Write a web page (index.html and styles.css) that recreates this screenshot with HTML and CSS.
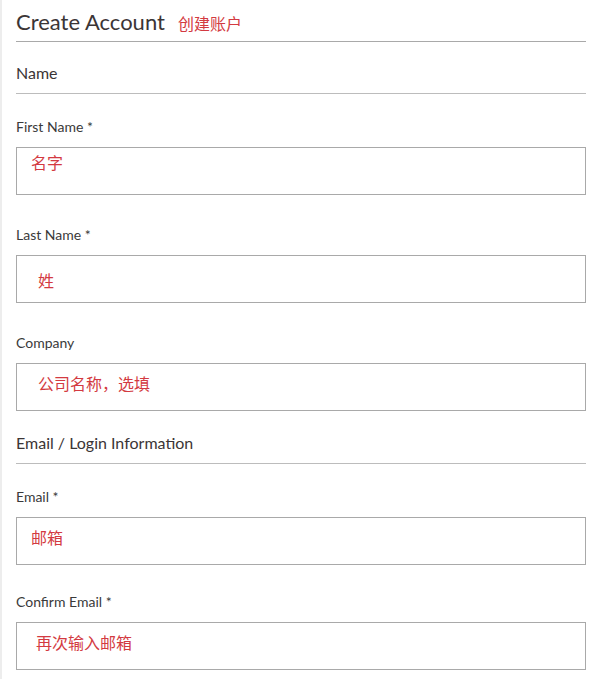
FILE: index.html
```html
<!DOCTYPE html>
<html lang="en">
<head>
    <meta charset="UTF-8">
    <meta name="viewport" content="width=device-width, initial-scale=1.0">
    <title>Create Account</title>
    <link rel="stylesheet" href="styles.css">
</head>
<body>
    <div class="page">
        <div class="page-title">
            <h1>Create Account</h1>
            <span class="note">创建账户</span>
        </div>

        <div class="section">
            <h2>Name</h2>
        </div>

        <div class="field">
            <label>First Name *</label>
            <div class="box"><span class="hint hint-top">名字</span></div>
        </div>

        <div class="field">
            <label>Last Name *</label>
            <div class="box"><span class="hint hint-low hint-indent">姓</span></div>
        </div>

        <div class="field">
            <label>Company</label>
            <div class="box"><span class="hint hint-indent">公司名称，选填</span></div>
        </div>

        <div class="section">
            <h2>Email / Login Information</h2>
        </div>

        <div class="field">
            <label>Email *</label>
            <div class="box"><span class="hint">邮箱</span></div>
        </div>

        <div class="field field-tight">
            <label>Confirm Email *</label>
            <div class="box"><span class="hint hint-mid">再次输入邮箱</span></div>
        </div>
    </div>
</body>
</html>
```

FILE: styles.css
```css
* {
    margin: 0;
    padding: 0;
    box-sizing: border-box;
}

body {
    background: white;
    font-family: Lato, "Open Sans", sans-serif;
    color: #3a3a3a;
}

.page {
    border-left: 2px solid #ededed;
    padding: 0 14px;
    min-height: 100vh;
}

.page-title {
    display: flex;
    align-items: baseline;
    gap: 13px;
    padding-top: 8px;
    padding-bottom: 5px;
    border-bottom: 1px solid #a9a9a9;
}

.page-title h1 {
    font-size: 22px;
    font-weight: normal;
    line-height: 28px;
    color: #3b3536;
}

.note {
    font-family: "Noto Sans CJK SC", sans-serif;
    font-size: 16px;
    color: #d33a41;
}

.section {
    margin-top: 20px;
    padding-bottom: 9px;
    border-bottom: 1px solid #bcbcbc;
}

.section h2 {
    font-size: 16px;
    font-weight: normal;
    line-height: 22px;
    color: #3b3536;
}

.field {
    margin-top: 23px;
}

.field + .field {
    margin-top: 30px;
}

.field + .field-tight {
    margin-top: 27px;
}

.field + .section {
    margin-top: 21px;
}

.field label {
    display: block;
    font-size: 14px;
    line-height: 20px;
    margin-bottom: 10px;
}

.box {
    height: 48px;
    border: 1px solid #a9a9a9;
    padding: 11px 14px 0;
}

.hint {
    display: block;
    font-family: "Noto Sans CJK SC", sans-serif;
    font-size: 16px;
    line-height: 16px;
    color: #d33a41;
}

.hint-top {
    margin-top: -5px;
}

.hint-low {
    margin-top: 5px;
}

.hint-indent {
    padding-left: 7px;
}

.hint-mid {
    padding-left: 5px;
}
```
